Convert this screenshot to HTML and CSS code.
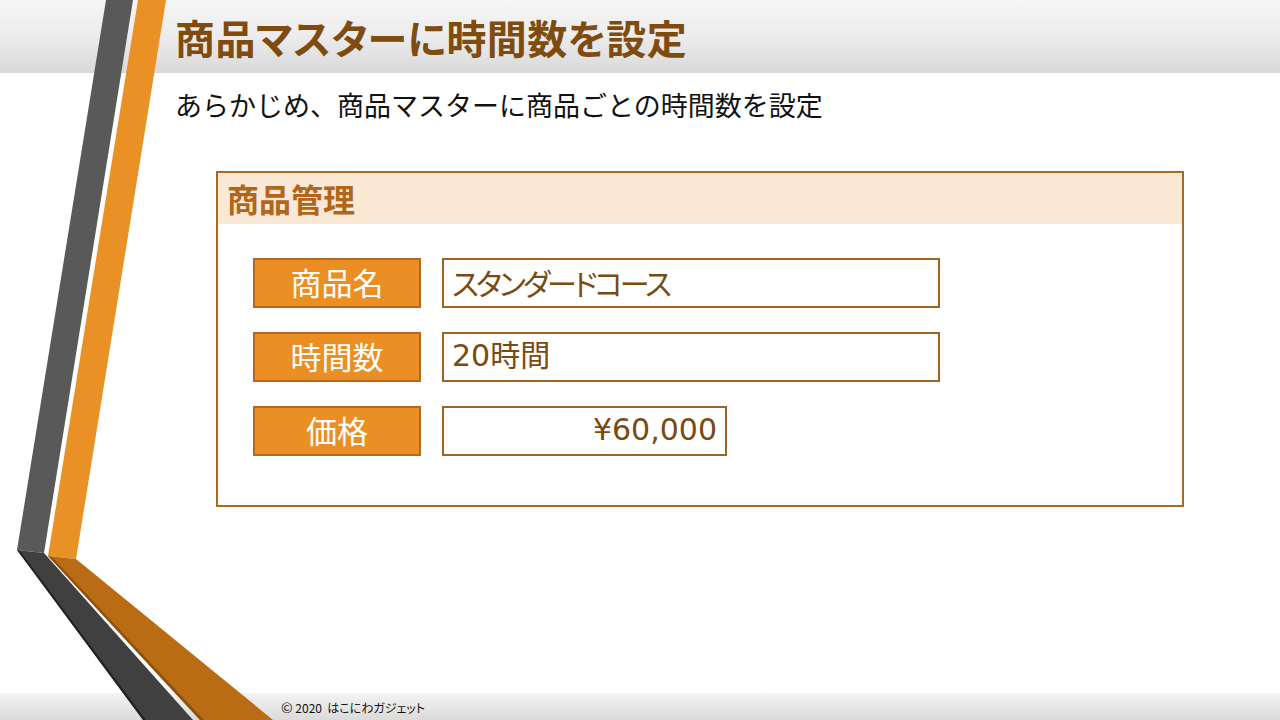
FILE: index.html
```html
<!DOCTYPE html>
<html lang="ja">
<head>
<meta charset="utf-8">
<title>商品マスターに時間数を設定</title>
<link rel="stylesheet" href="styles.css">
</head>
<body>
<div class="slide">
  <header class="top-bar">
    <h1 class="title">商品マスターに時間数を設定</h1>
  </header>
  <main class="content">
    <p class="lead">あらかじめ、商品マスターに商品ごとの時間数を設定</p>
    <section class="card">
      <div class="card-head">商品管理</div>
      <div class="card-body">
        <div class="row row-1">
          <div class="label">商品名</div>
          <div class="field field-wide"><span class="kana">スタンダードコース</span></div>
        </div>
        <div class="row row-2">
          <div class="label">時間数</div>
          <div class="field field-wide">20時間</div>
        </div>
        <div class="row row-3">
          <div class="label">価格</div>
          <div class="field field-price">¥60,000</div>
        </div>
      </div>
    </section>
  </main>
  <footer class="bottom-bar">
    <span class="copy"><span class="copy-mark">©</span>&nbsp;2020&nbsp;&nbsp;はこにわガジェット</span>
  </footer>
  <svg class="stripes" width="1280" height="720" viewBox="0 0 1280 720" aria-hidden="true">
    <polygon points="106,0 133,0 44,553 17,550" fill="#595959"/>
    <polygon points="17,550 44,553 193,720 143,720" fill="#404040"/>
    <polygon points="17,550 20,551 146,720 143,720" fill="#222"/>
    <polygon points="138,0 166,0 76,559 48,556" fill="#ea9126"/>
    <polygon points="48,556 76,559 273,720 200,720" fill="#ba6c14"/>
    <polygon points="48,556 52,557 204,720 200,720" fill="#8f520e"/>
  </svg>
</div>
</body>
</html>
```

FILE: styles.css
```css
* { box-sizing: border-box; }

html, body {
  margin: 0;
  padding: 0;
  background: #ffffff;
}

body {
  font-family: "Noto Sans CJK JP", "Noto Sans", sans-serif;
}

.slide {
  position: relative;
  width: 1280px;
  height: 720px;
  overflow: hidden;
  display: flex;
  flex-direction: column;
  background: #ffffff;
}

.top-bar {
  height: 73px;
  background: linear-gradient(to bottom, #f6f6f6 0%, #ececec 50%, #d9d9d9 100%);
  display: flex;
  align-items: center;
  padding-left: 175px;
}

.title {
  margin: 0;
  font-size: 40px;
  font-weight: 700;
  color: #7f4b0f;
  line-height: 1;
  letter-spacing: 0.4px;
  font-feature-settings: "palt";
}

.content {
  flex: 1;
  display: flex;
  flex-direction: column;
}

.lead {
  margin: 14px 0 0 175px;
  font-size: 27px;
  line-height: 36px;
  color: #111111;
}

.card {
  margin: 48px 0 0 216px;
  width: 968px;
  height: 336px;
  border: 2px solid #a7681f;
  display: flex;
  flex-direction: column;
}

.card-head {
  height: 51px;
  background: #fbe8d5;
  color: #b0661b;
  font-size: 32px;
  font-weight: 700;
  line-height: 51px;
  padding-left: 9px;
}

.card-body {
  display: flex;
  flex-direction: column;
  gap: 24px;
  padding: 34px 0 0 35px;
}

.row {
  display: flex;
  align-items: stretch;
  gap: 21px;
  height: 50px;
}

.label {
  width: 168px;
  background: #eb8f25;
  border: 2px solid #b4691f;
  color: #ffffff;
  font-size: 31px;
  line-height: 44px;
  text-align: center;
}

.field {
  border: 2px solid #9f6421;
  background: #ffffff;
  color: #7b4912;
  font-family: "DejaVu Sans", "Noto Sans CJK JP", sans-serif;
  font-size: 30px;
  line-height: 44px;
  padding: 0 8px;
}

.kana {
  font-family: "Noto Sans CJK JP", sans-serif;
  font-feature-settings: "palt";
  letter-spacing: -3px;
}

.field-wide { width: 498px; }

.field-price {
  width: 285px;
  text-align: right;
}

.bottom-bar {
  height: 27px;
  background: linear-gradient(to bottom, #f4f4f4 0%, #dadada 100%);
  display: flex;
  align-items: center;
  padding-left: 281px;
}

.copy {
  font-size: 12px;
  color: #111111;
  font-feature-settings: "palt";
}

.copy-mark {
  font-size: 14px;
}

.stripes {
  position: absolute;
  left: 0;
  top: 0;
  pointer-events: none;
}
```
